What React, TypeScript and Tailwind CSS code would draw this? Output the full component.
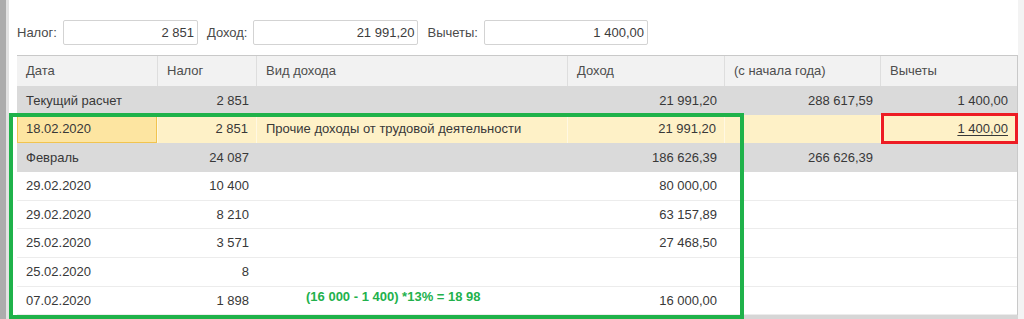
import React from "react";

type Row = {
  kind: "total" | "sel" | "group" | "row";
  date: string;
  tax: string;
  vid?: string;
  income?: string;
  ytd?: string;
  ded?: string;
  h: number;
};

const ROWS: Row[] = [
  { kind: "total", date: "Текущий расчет", tax: "2 851", income: "21 991,20", ytd: "288 617,59", ded: "1 400,00", h: 29 },
  { kind: "sel", date: "18.02.2020", tax: "2 851", vid: "Прочие доходы от трудовой деятельности", income: "21 991,20", ded: "1 400,00", h: 28 },
  { kind: "group", date: "Февраль", tax: "24 087", income: "186 626,39", ytd: "266 626,39", h: 29 },
  { kind: "row", date: "29.02.2020", tax: "10 400", income: "80 000,00", h: 29 },
  { kind: "row", date: "29.02.2020", tax: "8 210", income: "63 157,89", h: 28 },
  { kind: "row", date: "25.02.2020", tax: "3 571", income: "27 468,50", h: 29 },
  { kind: "row", date: "25.02.2020", tax: "8", h: 29 },
  { kind: "row", date: "07.02.2020", tax: "1 898", income: "16 000,00", h: 28 },
];

const COLS = "grid grid-cols-[141px_99px_311px_157px_156px_137px]";
const FONT = { fontFamily: '"Liberation Sans", Arial, sans-serif' };

function Field({ label, value, width }: { label: string; value: string; width: string }) {
  return (
    <div className="flex items-center gap-[6px]">
      <span className="text-[13px] text-[#4a4a4a]">{label}</span>
      <div
        className={`${width} flex h-[25px] items-center justify-end rounded-[2px] border border-[#d3d3d3] bg-white pr-[3px] text-[13px] text-[#3c3c3c]`}
      >
        {value}
      </div>
    </div>
  );
}

function DataRow({ row }: { row: Row }) {
  const bg =
    row.kind === "total" || row.kind === "group" ? "bg-[#dadada]"
    : row.kind === "sel" ? "bg-[#fef1c7]"
    : "bg-white border-b border-[#ececec]";
  const divider = row.kind === "sel" ? "border-r border-[#fff8e2]" : "";
  const cell = "flex items-center px-[9px] pr-[8px] whitespace-nowrap";

  return (
    <div className={`${COLS} ${bg} text-[13px] text-[#383838]`} style={{ height: row.h }}>
      <div className={`${cell} ${divider}`}>
        {row.kind === "sel" ?
          <div className="-ml-[9px] -mr-[8px] flex h-full w-[calc(100%+17px)] items-center border border-[#f1c44f] bg-[#fde5a1] pl-[8px]">
            {row.date}
          </div>
        : row.date}
      </div>
      <div className={`${cell} justify-end ${divider}`}>{row.tax}</div>
      <div className={`${cell} ${divider}`}>{row.vid ?? ""}</div>
      <div className={`${cell} justify-end ${divider}`}>{row.income ?? ""}</div>
      <div className={`${cell} justify-end ${divider}`}>{row.ytd ?? ""}</div>
      <div className={`${cell} justify-end pr-[10px]`}>
        {row.kind === "sel" ?
          <span className="underline underline-offset-2">{row.ded}</span>
        : row.ded ?? ""}
      </div>
    </div>
  );
}

export default function App() {
  return (
    <div className="relative flex h-[319px] w-[1024px] overflow-hidden bg-white" style={FONT}>
      <div className="w-[6px] shrink-0 bg-[#acacac]" />
      <div className="w-[3px] shrink-0 bg-[#e2e2e2]" />

      <div className="flex flex-col pl-[8px] pt-[20px]">
        <div className="flex items-center gap-[9px]">
          <Field label="Налог:" value="2 851" width="w-[135px]" />
          <Field label="Доход:" value="21 991,20" width="w-[165px]" />
          <Field label="Вычеты:" value="1 400,00" width="w-[164px]" />
        </div>

        <div className="mt-[10px] w-[1001px] border-r border-t border-[#c9c9c9]">
          <div className={`${COLS} h-[30px] bg-[#f2f2f2] text-[13px] text-[#4d4d4d]`}>
            {["Дата", "Налог", "Вид дохода", "Доход", "(с начала года)", "Вычеты"].map((h, i) => (
              <div
                key={h}
                className={`flex items-center pl-[9px] ${i < 5 ? "border-r border-[#dedede]" : ""}`}
              >
                {h}
              </div>
            ))}
          </div>
          {ROWS.map((row, i) => (
            <DataRow key={i} row={row} />
          ))}
        </div>
        <div className="h-[6px] w-[1001px] bg-[#d6d6d6]" />
      </div>

      <div className="flex-1 bg-[#f3f3f3]" />

      {/* annotation overlays */}
      <div className="pointer-events-none absolute left-[9px] top-[113px] h-[206px] w-[735px] border-4 border-solid border-[#1fb24a]" />
      <div className="pointer-events-none absolute left-[881px] top-[113px] h-[31px] w-[137px] border-[3px] border-solid border-[#ed1c24]" />
      <div className="absolute left-[306px] top-[289px] text-[13px] font-bold leading-[15px] text-[#22b14c]">
        (16 000 - 1 400) *13% = 18 98
      </div>
    </div>
  );
}
